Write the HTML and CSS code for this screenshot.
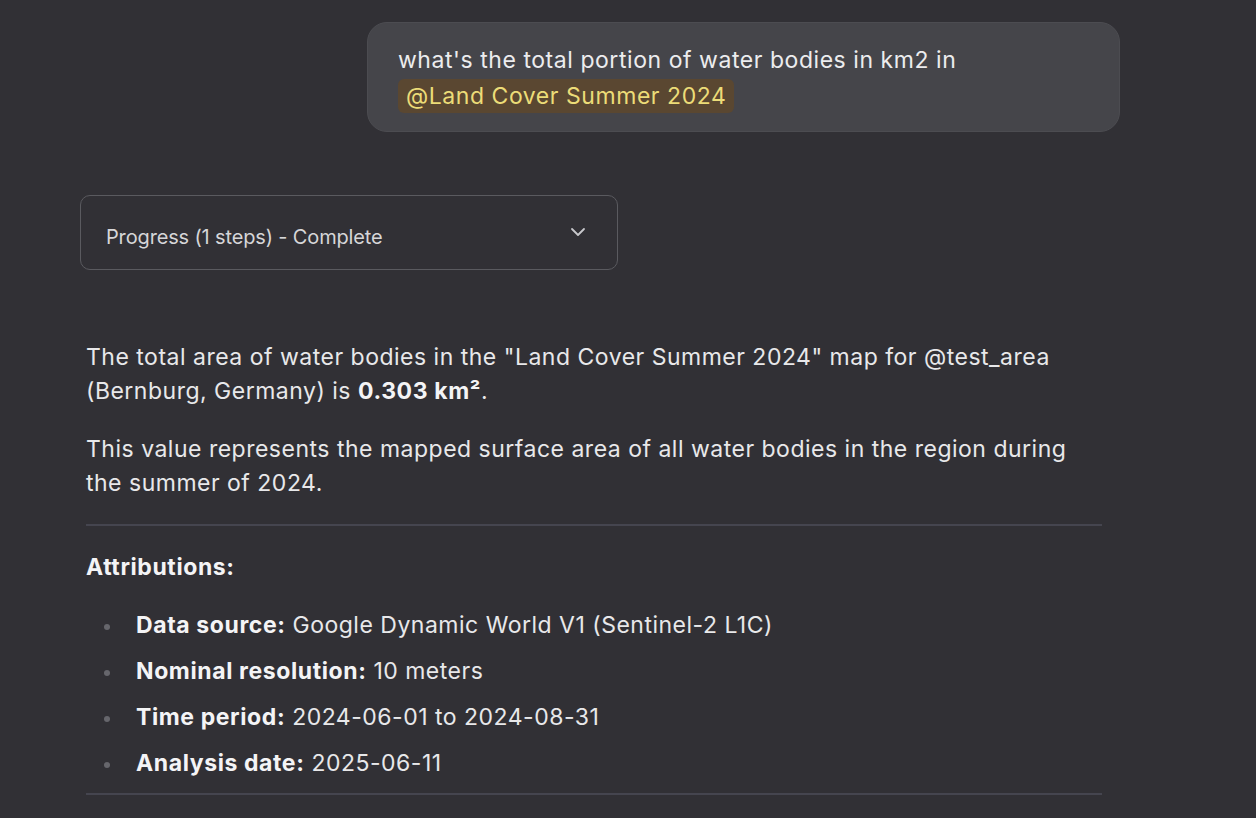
FILE: index.html
```html
<!DOCTYPE html>
<html lang="en">
<head>
  <meta charset="UTF-8" />
  <meta name="viewport" content="width=device-width, initial-scale=1.0"/>
  <title>Chat</title>
  <link rel="stylesheet" href="styles.css">
</head>
<body>
  <div class="chat">
    <div class="user-msg">
      what's the total portion of water bodies in km2 in<br>
      <span class="mention">@Land Cover Summer 2024</span>
    </div>

    <div class="progress">
      <span>Progress (1 steps) - Complete</span>
      <svg class="chevron" width="16" height="10" viewBox="0 0 16 10">
        <path d="M2 2 L8 8 L14 2" fill="none" stroke="#c8c8cc" stroke-width="1.8" stroke-linecap="round" stroke-linejoin="round"/>
      </svg>
    </div>

    <div class="answer">
      <p>The total area of water bodies in the "Land Cover Summer 2024" map for @test_area (Bernburg, Germany) is <b>0.303&nbsp;km²</b>.</p>
      <p>This value represents the mapped surface area of all water bodies in the region during the summer of 2024.</p>
      <hr>
      <p><b>Attributions:</b></p>
      <ul>
        <li><b>Data source:</b> Google Dynamic World V1 (Sentinel-2 L1C)</li>
        <li><b>Nominal resolution:</b> 10 meters</li>
        <li><b>Time period:</b> 2024-06-01 to 2024-08-31</li>
        <li><b>Analysis date:</b> 2025-06-11</li>
      </ul>
      <hr>
    </div>
  </div>
</body>
</html>
```

FILE: styles.css
```css
body {
  background-color: #313035;
  color: #e8e8ea;
  font-family: Inter, "Noto Sans", sans-serif;
  margin: 0;
  padding: 0;
}
.chat {
  width: 1040px;
  margin-left: 80px;
  padding-top: 22px;
  display: flex;
  flex-direction: column;
}
.user-msg {
  align-self: flex-end;
  width: 753px;
  box-sizing: border-box;
  background-color: #45454a;
  border: 1px solid #4c4c51;
  border-radius: 20px;
  padding: 19px 30px 17px;
  font-size: 23px;
  letter-spacing: 0.55px;
  line-height: 36px;
  color: #ececee;
}
.mention {
  display: inline-block;
  background-color: #5a4731;
  color: #ecdc78;
  border-radius: 6px;
  padding: 0 8px;
  line-height: 34px;
}
.progress {
  margin-top: 63px;
  width: 538px;
  height: 75px;
  box-sizing: border-box;
  border: 1.5px solid #5a5a5f;
  border-radius: 10px;
  padding: 8px 31px 0 25px;
  display: flex;
  align-items: center;
  justify-content: space-between;
  font-size: 20px;
  letter-spacing: -0.15px;
  color: #d6d6d8;
}
.chevron {
  margin-top: -9px;
}
.answer {
  margin: 70px 18px 0 6px;
  font-size: 23px;
  letter-spacing: 0.5px;
  line-height: 34px;
}
.answer p {
  margin: 0 0 24px;
}
.answer b {
  font-weight: 700;
  letter-spacing: 0.6px;
  color: #f4f4f6;
}
.answer hr {
  border: none;
  border-top: 2px solid #45454f;
  margin: 0 0 24px;
}
.answer ul {
  list-style: none;
  margin: 0 0 13px;
  padding-left: 50px;
}
.answer li {
  margin-bottom: 12px;
}
.answer li::before {
  content: "";
  display: inline-block;
  width: 6px;
  height: 6px;
  border-radius: 50%;
  background-color: #66666c;
  margin-left: -32px;
  margin-right: 26px;
  vertical-align: middle;
}
.answer li:last-child {
  margin-bottom: 0;
}
```
